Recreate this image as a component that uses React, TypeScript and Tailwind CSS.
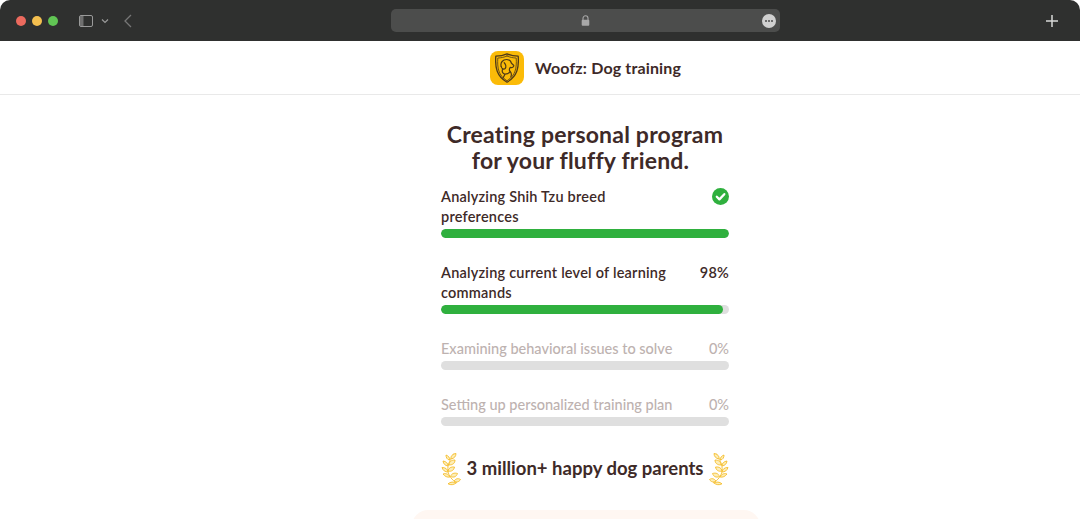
import React from "react";

const Laurel = ({ flip }: { flip?: boolean }) => (
  <svg width="20" height="34" viewBox="0 0 20 34" fill="#fdeeb8" stroke="#f5bd2e" strokeWidth="0.9" className={flip ? "-scale-x-100" : ""}>
    <path d="M13 1.5C10 7 6 12 7 19c.6 5 4 9 9 12" fill="none" />
    <path d="M10 7c-.5-3 1.500-5 5-5.500C15 4.500 13 6.500 10 7Z" />
    <path d="M8.500 8C6 7.500 5 5.500 5 3c2.500 1 4 2.500 3.500 5Z" />
    <path d="M8 13c0-3 2-5 6-5 0 3-2 5-6 5Z" />
    <path d="M7 14C4 13.500 2.500 12 2 9c3 .5 5 2 5 5Z" />
    <path d="M7 19c.5-3 3-4.500 6.500-4-.5 3-3 5-6.500 4Z" />
    <path d="M7 20c-3 0-5-1.500-6-4.500 3.500 0 5.500 1.500 6 4.500Z" />
    <path d="M9.500 24.500c1-3 3.500-4 7-3-1 3-3.500 4.500-7 3Z" />
    <path d="M9 25c-3 .5-5-.5-7-3 3-1 5.500 0 7 3Z" />
    <path d="M13 29c2-2.500 4-3 6.500-1.500-1.500 2.500-4 3.200-6.500 1.500Z" />
    <path d="M15 31c-2.500 2-5 2.200-8 .8 2.500-2 5.500-2.300 8-.8Z" />
  </svg>
);

const Row = ({ label, value, pct, muted, done }: { label: React.ReactNode; value?: string; pct: number; muted?: boolean; done?: boolean }) => (
  <div className="flex flex-col">
    <div className={`flex justify-between text-[14.500px] leading-[20px] ${muted ? "text-[#bdb2b0] font-medium" : "text-[#3e2a28] font-semibold tracking-[0.22px]"}`}>
      <div className="w-[235px]">{label}</div>
      {done ? (
        <svg width="17" height="17" viewBox="0 0 17 17" className="mt-[1px]">
          <circle cx="8.500" cy="8.500" r="8.500" fill="#2fb03e" />
          <path d="M4.800 8.800 7.400 11.400 12.300 6.200" fill="none" stroke="#fff" strokeWidth="2.300" strokeLinecap="round" strokeLinejoin="round" />
        </svg>
      ) : (
        <div>{value}</div>
      )}
    </div>
    <div className="mt-[2px] h-[9px] rounded-full bg-[#dfdfdf] overflow-hidden">
      <div className="h-full rounded-full bg-[#2fb03e]" style={{ width: `${pct}%` }} />
    </div>
  </div>
);

export default function App() {
  return (
    <div className="w-[1080px] h-[519px] overflow-hidden bg-white font-['Lato','Noto_Sans',sans-serif]">
      <div className="h-[41px] bg-[#2f302f] rounded-t-[10px] flex items-center relative">
        <div className="flex items-center gap-[6px] ml-[16px]">
          <span className="w-[10px] h-[10px] rounded-full bg-[#ec6a5e]" />
          <span className="w-[10px] h-[10px] rounded-full bg-[#f4bf4f]" />
          <span className="w-[10px] h-[10px] rounded-full bg-[#61c554]" />
        </div>
        <svg width="14" height="12" viewBox="0 0 14 12" fill="none" className="ml-[21px]">
          <rect x="0.500" y="0.500" width="13" height="11" rx="1.500" stroke="#9a9a9a" />
          <rect x="1" y="1" width="3.500" height="10" fill="#6f6f6f" />
        </svg>
        <svg width="8" height="6" viewBox="0 0 8 6" fill="none" className="ml-[8px]">
          <path d="M1 1.500 4 4.500 7 1.500" stroke="#9a9a9a" strokeWidth="1.200" />
        </svg>
        <svg width="8" height="14" viewBox="0 0 8 14" fill="none" className="ml-[15px]">
          <path d="M7 1 1 7l6 6" stroke="#777" strokeWidth="1.300" />
        </svg>
        <div className="absolute left-[391px] top-[9px] w-[389px] h-[23px] rounded-[5px] bg-[#4c4d4c] flex items-center justify-center">
          <svg width="9" height="11" viewBox="0 0 9 11">
            <path d="M2 5V3.300a2.500 2.500 0 0 1 5 0V5" fill="none" stroke="#a8a8a8" strokeWidth="1.100" />
            <rect x="0.700" y="4.700" width="7.600" height="6" rx="1" fill="#a8a8a8" />
          </svg>
          <div className="absolute right-[4px] top-[4.500px] w-[14px] h-[14px] rounded-full bg-[#d0d0d0] flex items-center justify-center gap-[1px]">
            <span className="w-[2px] h-[2px] rounded-full bg-[#4c4d4c]" />
            <span className="w-[2px] h-[2px] rounded-full bg-[#4c4d4c]" />
            <span className="w-[2px] h-[2px] rounded-full bg-[#4c4d4c]" />
          </div>
        </div>
        <svg width="12" height="12" viewBox="0 0 12 12" className="absolute right-[22px] top-[15px]">
          <path d="M6 0v12M0 6h12" stroke="#d8d8d8" strokeWidth="1.500" />
        </svg>
      </div>

      <div className="h-[54px] border-b border-[#e9e9e9] flex items-center gap-[11px] pl-[490px]">
        <div className="w-[34px] h-[34px] rounded-[8px] bg-[#fbbb08] flex items-center justify-center">
          <svg width="24" height="30" viewBox="0 0 24 30" fill="none" stroke="#4f3a18" strokeWidth="1" strokeLinejoin="round" strokeLinecap="round">
            <path d="M12 .8c3.200 1.500 7 2.300 11.200 2.300.8 11-.6 20-11.200 26.100C1.400 23.100 0 14.100.8 3.100 5 3.100 8.800 2.300 12 .8Z" strokeWidth="1.300" />
            <path d="M12 3c2.800 1.200 6 2 9.200 2 .6 9.800-.6 17.500-9.200 22.800C3.400 22.500 2.200 14.800 2.800 5 6 5 9.200 4.200 12 3Z" strokeWidth="0.800" />
            <path d="M6.200 13.500C5 9.500 8 6.500 11.500 6.500c2.700 0 4.300 1.500 5 3.800l2.300 2.200c0 1.500-1.600 2.500-3.500 1.900-1 1.200-1.200 2.500-.6 3.800" strokeWidth="1.200" />
            <path d="M6.200 13.500c.5 2.500 2.700 3.200 4 2 1.200-1.300.7-4.200-1-5.800" strokeWidth="1.200" />
            <path d="M7.500 16.500c-.8 2.300.2 4 2.500 4.700L8 25M15.200 18.500c1.300 1.500 1.500 3.500.6 5.500M10 21.200c2.200 0 4-.7 5.200-2.700" strokeWidth="1.200" />
          </svg>
        </div>
        <div className="text-[16px] font-bold text-[#3e2a28] tracking-[0.15px]">Woofz: Dog training</div>
      </div>

      <div className="w-[288px] ml-[441px]">
        <h1 className="mt-[26px] w-[320px] -ml-[16px] text-center text-[23px] leading-[26px] font-bold text-[#3e2a28] tracking-[0.2px]">
          Creating personal program<br /><span className="inline-block pr-[9px]">for your fluffy friend.</span>
        </h1>
        <div className="mt-[14px] flex flex-col gap-[25px]">
          <Row label="Analyzing Shih Tzu breed preferences" pct={100} done />
          <Row label="Analyzing current level of learning commands" value="98%" pct={98} />
          <Row label="Examining behavioral issues to solve" value="0%" pct={0} muted />
          <Row label="Setting up personalized training plan" value="0%" pct={0} muted />
        </div>
        <div className="mt-[26px] flex items-center justify-between">
          <Laurel />
          <div className="text-[18.500px] font-bold text-[#3e2a28]">3 million+ happy dog parents</div>
          <Laurel flip />
        </div>
      </div>
      <div className="mt-[24px] w-[348px] ml-[412px] h-[40px] rounded-t-[16px] bg-[#fff7f2]" />
    </div>
  );
}
